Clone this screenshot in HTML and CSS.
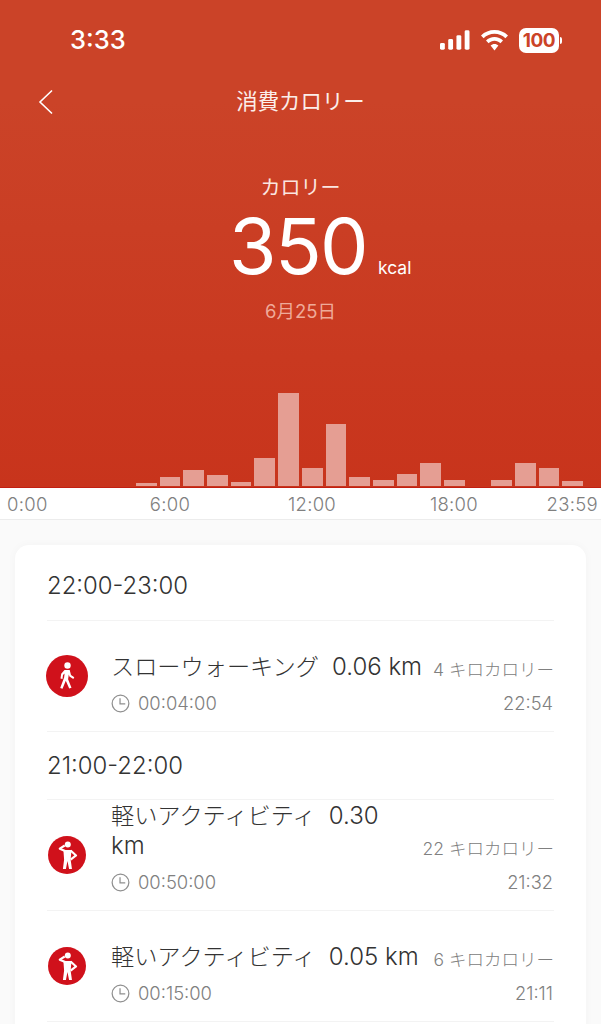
FILE: index.html
```html
<!DOCTYPE html>
<html lang="ja">
<head>
<meta charset="utf-8">
<title>消費カロリー</title>
<link rel="stylesheet" href="styles.css">
</head>
<body>
<header class="hero">
  <div class="status">
    <span class="clock">3:33</span>
    <div class="status-icons">
      <svg class="signal" width="30" height="20" viewBox="0 0 31 20"><rect x="0" y="13" width="5" height="7" rx="1.5"/><rect x="8.500" y="9" width="5" height="11" rx="1.5"/><rect x="17" y="5" width="5" height="15" rx="1.5"/><rect x="25.500" y="0" width="5" height="20" rx="1.5"/></svg>
      <svg class="wifi" width="27" height="21" viewBox="0 0 27 21"><path d="M13.500 0C8.300 0 3.600 2 0 5.400l2.600 2.800C5.500 5.500 9.300 3.800 13.500 3.800s8 1.700 10.900 4.400L27 5.400C23.400 2 18.700 0 13.500 0z"/><path d="M13.500 7c-3.300 0-6.300 1.300-8.500 3.400l2.600 2.800c1.500-1.500 3.600-2.400 5.900-2.400s4.400.9 5.900 2.400l2.600-2.800C19.800 8.300 16.800 7 13.500 7z"/><path d="M13.500 14c-1.500 0-2.900.6-3.900 1.600l3.900 4.900 3.900-4.900c-1-1-2.400-1.600-3.900-1.600z"/></svg>
      <div class="battery"><span class="battery-body">100</span><span class="battery-tip"></span></div>
    </div>
  </div>
  <div class="nav">
    <svg class="back" width="16" height="26" viewBox="0 0 16 26"><path d="M14 1.500 2 13l12 11.500"/></svg>
    <h1 class="nav-title">消費カロリー</h1>
  </div>
  <div class="summary">
    <div class="summary-label">カロリー</div>
    <div class="summary-value"><span class="value-number">350</span><span class="value-unit">kcal</span></div>
    <div class="summary-date">6月25日</div>
  </div>
  <div class="chart">
    <span class="bar" style="height:3px"></span>
    <span class="bar" style="height:9px"></span>
    <span class="bar" style="height:16px"></span>
    <span class="bar" style="height:11px"></span>
    <span class="bar" style="height:4px"></span>
    <span class="bar" style="height:28px"></span>
    <span class="bar" style="height:93px"></span>
    <span class="bar" style="height:18px"></span>
    <span class="bar" style="height:62px"></span>
    <span class="bar" style="height:9px"></span>
    <span class="bar" style="height:6px"></span>
    <span class="bar" style="height:12px"></span>
    <span class="bar" style="height:23px"></span>
    <span class="bar" style="height:6px"></span>
    <span class="bar" style="height:0"></span>
    <span class="bar" style="height:6px"></span>
    <span class="bar" style="height:23px"></span>
    <span class="bar" style="height:18px"></span>
    <span class="bar" style="height:5px"></span>
  </div>
</header>
<div class="axis">
  <span class="tick-start">0:00</span>
  <span class="tick-mid">6:00</span>
  <span class="tick-mid">12:00</span>
  <span class="tick-mid">18:00</span>
  <span class="tick-end">23:59</span>
</div>
<main class="content">
  <section class="card">
    <h2 class="hour hour-first">22:00-23:00</h2>
    <article class="row">
      <svg class="activity" width="42" height="42" viewBox="0 0 42 42"><circle cx="21" cy="21" r="21" fill="#d0111b"/><circle cx="21.500" cy="10.500" r="3.200" fill="#fff"/><path fill="#fff" d="M18.500 15h5.200l1.300 5 3.300 2.300-1 1.600-3.900-2.500-.6-1.800-.7 4.600 3.400 8.600-2.300.8-3.400-7.800-3.300 8-2.300-.8 3.900-10.400.5-4.200-1.600 1.700-.5 3.800-2-.3.700-4.900z"/></svg>
      <div class="row-main">
        <div class="row-name">スローウォーキング&nbsp; <span class="row-metric">0.06 km</span></div>
        <div class="row-duration">
          <svg class="clock-icon" width="19" height="19" viewBox="0 0 20 20"><circle cx="10" cy="10" r="8.800"/><path d="M9.500 4.500V10.500H15"/></svg>
          <span>00:04:00</span>
        </div>
      </div>
      <div class="row-side">
        <div class="row-kcal">4 キロカロリー</div>
        <div class="row-time">22:54</div>
      </div>
    </article>
    <h2 class="hour">21:00-22:00</h2>
    <article class="row">
      <svg class="activity activity-small" width="38" height="38" viewBox="0 0 42 42"><circle cx="21" cy="21" r="21" fill="#d0111b"/><circle cx="21.900" cy="9.300" r="3.300" fill="#fff"/><path fill="#fff" d="M17 15.500h9l-1 10.500 1.500 10.500h-3.200l-1.800-9-1.700 9h-3.300l1.300-10.500z"/><path class="limb" d="M19 16.500 13 14l5.500-3.500M25 16l6 5.500-6 4.500"/></svg>
      <div class="row-main">
        <div class="row-name">軽いアクティビティ&nbsp; <span class="row-metric">0.30 km</span></div>
        <div class="row-duration">
          <svg class="clock-icon" width="19" height="19" viewBox="0 0 20 20"><circle cx="10" cy="10" r="8.800"/><path d="M9.500 4.500V10.500H15"/></svg>
          <span>00:50:00</span>
        </div>
      </div>
      <div class="row-side">
        <div class="row-kcal">22 キロカロリー</div>
        <div class="row-time">21:32</div>
      </div>
    </article>
    <article class="row">
      <svg class="activity activity-small" width="38" height="38" viewBox="0 0 42 42"><circle cx="21" cy="21" r="21" fill="#d0111b"/><circle cx="21.900" cy="9.300" r="3.300" fill="#fff"/><path fill="#fff" d="M17 15.500h9l-1 10.500 1.500 10.500h-3.200l-1.800-9-1.700 9h-3.300l1.300-10.500z"/><path class="limb" d="M19 16.500 13 14l5.500-3.500M25 16l6 5.500-6 4.500"/></svg>
      <div class="row-main">
        <div class="row-name">軽いアクティビティ&nbsp; <span class="row-metric">0.05 km</span></div>
        <div class="row-duration">
          <svg class="clock-icon" width="19" height="19" viewBox="0 0 20 20"><circle cx="10" cy="10" r="8.800"/><path d="M9.500 4.500V10.500H15"/></svg>
          <span>00:15:00</span>
        </div>
      </div>
      <div class="row-side">
        <div class="row-kcal">6 キロカロリー</div>
        <div class="row-time">21:11</div>
      </div>
    </article>
  </section>
</main>
</body>
</html>
```

FILE: styles.css
```css
* { box-sizing: border-box; }
html, body { margin: 0; height: 1024px; overflow: hidden; }
body {
  background: #fafafa;
  font-family: Inter, "Noto Sans CJK JP", sans-serif;
  color: #333;
}
.hero {
  height: 488px;
  background: linear-gradient(#cb4328, #cb4328 100px, #c8341c);
  color: #fff;
  display: flex;
  flex-direction: column;
  border-bottom: 1px solid #c21f12;
}
.status {
  height: 78px;
  padding: 23px 39px 0 70px;
  display: flex;
  justify-content: space-between;
  align-items: flex-start;
}
.clock { font-size: 25.500px; font-weight: 500; line-height: 34px; }
.status-icons { display: flex; align-items: center; gap: 11px; height: 34px; }
.signal, .wifi { fill: #fff; }
.battery { display: flex; align-items: center; gap: 1px; }
.battery-body {
  width: 40px; height: 25px; border-radius: 7px;
  background: #fff; color: #cb4328;
  font-size: 19px; font-weight: 700; line-height: 25px; text-align: center;
  letter-spacing: -.5px;
}
.battery-tip { width: 2px; height: 7px; border-radius: 0 2px 2px 0; background: #fff; }
.nav { position: relative; height: 46px; display: flex; align-items: center; justify-content: center; }
.back { position: absolute; left: 38px; top: 11px; fill: none; stroke: #fff; stroke-width: 1.600; }
.nav-title { margin: 0; font-size: 21.400px; font-weight: 400; line-height: 46px; color: #fbeeea; }
.summary { margin-top: 51px; display: flex; flex-direction: column; align-items: center; }
.summary-label { font-size: 20px; line-height: 26px; color: #fbe6e0; }
.summary-value { position: relative; line-height: 92px; height: 92px; margin: -1px 5px 0 0; }
.value-number { font-size: 77px; font-weight: 400; letter-spacing: -1.700px; }
.value-unit { position: absolute; left: calc(100% + 11px); bottom: 13px; font-size: 17.500px; line-height: 22px; }
.summary-date { margin-top: 8px; font-size: 18.500px; line-height: 22px; color: #efaa99; }
.chart {
  margin-top: auto;
  padding: 0 0 1px 136px;
  display: flex;
  align-items: flex-end;
  gap: 3px;
}
.bar { width: 20.700px; background: #e59e93; }
.axis {
  height: 32px;
  padding: 0 3px 0 7px;
  background: #fff;
  border-bottom: 1px solid #ececec;
  display: grid;
  grid-template-columns: 92px 142px 142px 142px 1fr;
  align-items: center;
  font-size: 18.500px;
  font-weight: 300;
  letter-spacing: .3px;
  color: #808080;
}
.tick-mid { text-align: center; }
.tick-end { text-align: right; }
.content { padding: 25px 15px 0; }
.card {
  background: #fff;
  border-radius: 14px;
  padding: 0 32px 40px;
  box-shadow: 0 0 10px rgba(0, 0, 0, .03);
}
.hour {
  margin: 0;
  height: 68px;
  font-size: 23.900px;
  font-weight: 300;
  line-height: 68px;
  color: #333;
  border-bottom: 1px solid #f3f3f3;
}
.hour-first { height: 76px; line-height: 82px; }
.row {
  height: 111px;
  display: flex;
  align-items: center;
  border-bottom: 1px solid #f3f3f3;
}
.activity { flex: none; margin: 0 23px 0 -1px; }
.activity-small { margin: 0 25px 0 1px; }
.limb { fill: none; stroke: #fff; stroke-width: 2.400; stroke-linejoin: round; }
.row-main { flex: 1; min-width: 0; align-self: flex-end; padding-bottom: 16px; }
.row-name { font-size: 23.200px; font-weight: 300; line-height: 30px; color: #333; }
.row-metric { font-size: 24px; }
.row-duration {
  margin-top: 6px;
  display: flex;
  align-items: center;
  gap: 8px;
  font-size: 18.400px;
  font-weight: 300;
  line-height: 30px;
  height: 30px;
  color: #808080;
  margin-bottom: -3px;
}
.clock-icon { flex: none; fill: none; stroke: #8f8f8f; stroke-width: 1.300; }
.row-side { flex: none; margin-left: 8px; align-self: flex-end; padding-bottom: 16px; text-align: right; color: #808080; }
.row-kcal { font-size: 17.500px; font-weight: 300; line-height: 24px; }
.row-time { margin: 9px 1px 0 0; font-size: 18.300px; font-weight: 300; line-height: 24px; }
```
